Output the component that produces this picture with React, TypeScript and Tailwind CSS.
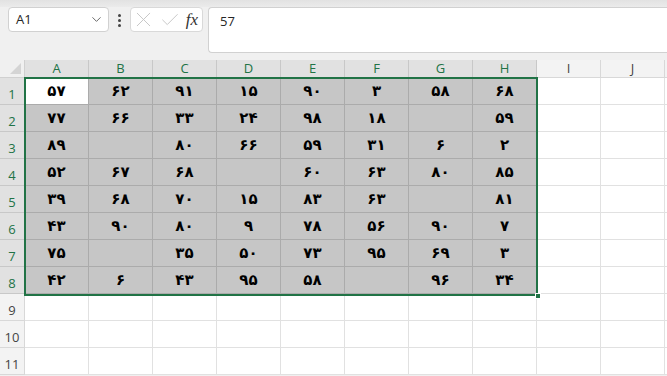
import { ChevronDown, X, Check } from "lucide-react";

const cols = ["A", "B", "C", "D", "E", "F", "G", "H", "I", "J"];

const data: string[][] = [
  ["57", "62", "91", "15", "90", "3", "58", "68"],
  ["77", "66", "33", "24", "98", "18", "", "59"],
  ["89", "", "80", "66", "59", "31", "6", "2"],
  ["52", "67", "68", "", "60", "63", "80", "85"],
  ["39", "68", "70", "15", "83", "63", "", "81"],
  ["43", "90", "80", "9", "78", "56", "90", "7"],
  ["75", "", "35", "50", "73", "95", "69", "3"],
  ["42", "6", "43", "95", "58", "", "96", "34"],
];

const fa = (s: string) => s.replace(/[0-9]/g, (d) => "۰۱۲۳۴۵۶۷۸۹"[Number(d)]);

function FormulaBar() {
  return (
    <div className="flex h-[52px] items-start pl-2">
      <div className="mt-[7px] flex h-[25px] w-[101px] items-center justify-between rounded border border-[#d1d1d1] bg-white pl-[7px] pr-[4px] text-[13px] text-[#262626]">
        <span>A1</span>
        <ChevronDown size={15} strokeWidth={1.4} className="text-[#555]" />
      </div>
      <div className="mt-[14px] flex w-[21px] flex-col items-center gap-[2px]">
        <span className="h-[3px] w-[3px] rounded-full bg-[#444]" />
        <span className="h-[3px] w-[3px] rounded-full bg-[#444]" />
        <span className="h-[3px] w-[3px] rounded-full bg-[#444]" />
      </div>
      <div className="mt-[7px] flex h-[25px] w-[73px] items-center justify-between rounded border border-[#d9d9d9] bg-white pl-0 pr-[4px]">
        <X size={25} strokeWidth={0.9} className="text-[#c4c4c4]" />
        <Check size={22} strokeWidth={1} className="-ml-[2px] text-[#c4c4c4]" />
        <span className="font-['Liberation_Serif',serif] text-[17px] italic text-[#333]">fx</span>
      </div>
      <div className="ml-[5px] mt-[7px] h-[46px] flex-1 rounded-l border border-r-0 border-[#d1d1d1] bg-white pl-[11px] pt-[4px] text-[13px] text-[#262626]">
        57
      </div>
    </div>
  );
}

export default function App() {
  return (
    <div className="relative h-[376px] w-[667px] overflow-hidden bg-[#f0f0f0] font-['Open_Sans','Noto_Sans',sans-serif]">
      <div className="absolute left-0 right-0 top-0 h-[7px] bg-gradient-to-b from-[#e2e2e2] to-[#ebebeb]" />
      <div className="relative">
        <FormulaBar />
      </div>

      <div className="mt-[8px] grid grid-cols-[25px_repeat(10,64px)_1fr] grid-rows-[18px_repeat(11,27px)] bg-white">
        <div className="relative border-b border-r border-[#d0d0d0] bg-[#f0f0f0]">
          <div className="absolute bottom-[3px] right-[3px] h-0 w-0 border-b-[11px] border-l-[11px] border-b-[#d4d4d4] border-l-transparent" />
        </div>
        {cols.map((c, i) => (
          <div
            key={c}
            className={
              i < 8
                ? "flex items-center justify-center border-b border-r border-[#c8c8c8] bg-[#e1e1e1] text-[13px] text-[#217346]"
                : "flex items-center justify-center border-b border-r border-[#d8d8d8] bg-[#f3f3f3] text-[13px] text-[#444]"
            }
          >
            {c}
          </div>
        ))}
        <div className="border-b border-[#d8d8d8] bg-[#f3f3f3]" />

        {Array.from({ length: 11 }).map((_, r) => (
          <Row key={r} r={r} />
        ))}
      </div>

      <div className="pointer-events-none absolute left-[24px] top-[77px] h-[219px] w-[514px] border-2 border-[#217346]" />
      <div className="absolute left-[535px] top-[293px] h-[6px] w-[6px] border border-white bg-[#217346]" />
    </div>
  );
}

function Row({ r }: { r: number }) {
  const sel = r < 8;
  return (
    <>
      <div
        className={
          sel
            ? "flex items-end justify-center border-b border-r border-[#c8c8c8] bg-[#e1e1e1] text-[13px] text-[#217346]"
            : "flex items-end justify-center border-b border-r border-[#d8d8d8] bg-[#f3f3f3] text-[13px] text-[#444]"
        }
      >
        {r + 1}
      </div>
      {cols.map((c, i) => {
        const inSel = sel && i < 8;
        const active = r === 0 && i === 0;
        const v = inSel ? data[r][i] : "";
        return (
          <div
            key={c}
            className={
              active
                ? "flex items-center justify-center border-b border-r border-[#ababab] bg-white pt-[1px] font-['DejaVu_Sans',sans-serif] text-[15px] font-bold text-black"
                : inSel
                ? "flex items-center justify-center border-b border-r border-[#ababab] bg-[#c6c6c6] pt-[1px] font-['DejaVu_Sans',sans-serif] text-[15px] font-bold text-black"
                : "border-b border-r border-[#e1e1e1] bg-white"
            }
          >
            {fa(v)}
          </div>
        );
      })}
      <div className="border-b border-[#e1e1e1] bg-white" />
    </>
  );
}
